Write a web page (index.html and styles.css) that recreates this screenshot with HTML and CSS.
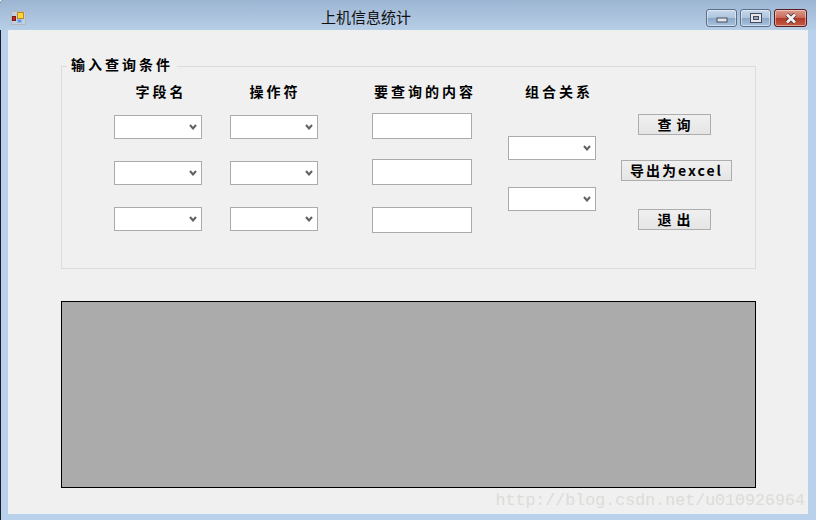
FILE: index.html
```html
<!DOCTYPE html>
<html lang="zh">
<head>
<meta charset="utf-8">
<title>上机信息统计</title>
<link rel="stylesheet" href="styles.css">
</head>
<body>
<div class="window">
  <header class="titlebar">
    <svg class="app-icon" width="15" height="14" viewBox="0 0 15 14">
      <rect x="0" y="0" width="15" height="14" fill="#b4b8bc"/>
      <rect x="1" y="1" width="13" height="12" fill="#c0d0e2"/>
      <rect x="1.5" y="5.5" width="3" height="4" fill="#c82a1c" stroke="#7a1a12"/>
      <rect x="6.5" y="1.5" width="6" height="6" fill="#fdd23c" stroke="#b98c1e"/>
      <rect x="6.5" y="8.5" width="4" height="3" fill="#5d96e8" stroke="#9db8e0"/>
    </svg>
    <h1 class="title">上机信息统计</h1>
    <div class="caption-buttons">
      <button class="cap cap-blue cap-min" type="button" aria-label="最小化">
        <svg width="12" height="6" viewBox="0 0 12 6"><rect x="1" y="1" width="10" height="4" fill="#e6e6ea" stroke="#444c60"/></svg>
      </button>
      <button class="cap cap-blue" type="button" aria-label="最大化">
        <svg width="12" height="10" viewBox="0 0 12 10"><rect x="1.5" y="1.5" width="9" height="7" fill="none" stroke="#e6e6ea" stroke-width="3"/><rect x="0.5" y="0.5" width="11" height="9" fill="none" stroke="#444c60"/><rect x="3.5" y="3.5" width="5" height="3" fill="#8fa6c4" stroke="#444c60"/></svg>
      </button>
      <button class="cap cap-red" type="button" aria-label="关闭">
        <svg width="14" height="11" viewBox="0 0 14 11"><path d="M3 1.5 L11 9.5 M11 1.5 L3 9.5" stroke="#4a3036" stroke-width="4.4"/><path d="M3 1.5 L11 9.5 M11 1.5 L3 9.5" stroke="#f2f0f0" stroke-width="2.8"/></svg>
      </button>
    </div>
  </header>
  <main class="client">
    <fieldset class="group">
      <legend class="legend">输入查询条件</legend>
      <div class="columns">
        <div class="col col-field">
          <div class="head">字段名</div>
          <select class="combo first-combo"></select>
          <select class="combo gap-22"></select>
          <select class="combo gap-22"></select>
        </div>
        <div class="col col-op">
          <div class="head">操作符</div>
          <select class="combo first-combo"></select>
          <select class="combo gap-22"></select>
          <select class="combo gap-22"></select>
        </div>
        <div class="col col-value">
          <div class="head">要查询的内容</div>
          <input class="text first-text" type="text">
          <input class="text gap-20" type="text">
          <input class="text gap-22" type="text">
        </div>
        <div class="col col-rel">
          <div class="head">组合关系</div>
          <select class="combo first-rel"></select>
          <select class="combo gap-27"></select>
        </div>
        <div class="col col-actions">
          <button class="btn btn-narrow first-btn" type="button">查 询</button>
          <button class="btn btn-wide gap-25" type="button">导出为excel</button>
          <button class="btn btn-narrow gap-28" type="button">退 出</button>
        </div>
      </div>
    </fieldset>
    <div class="grid-panel"></div>
  </main>
  <div class="watermark">http://blog.csdn.net/u010926964</div>
</div>
</body>
</html>
```

FILE: styles.css
```css
* { box-sizing: border-box; }
html, body { margin: 0; padding: 0; }
body { width: 816px; height: 520px; overflow: hidden; background: #fff; }

.window {
  position: relative;
  width: 816px;
  height: 520px;
  display: flex;
  flex-direction: column;
  padding: 0 8px 6px 8px;
  background: #b9d1ea;
  box-shadow: inset 1px 0 0 #1a1f26;
  border-top-left-radius: 4px;
}

.titlebar {
  position: relative;
  height: 30px;
  margin: 0 -8px;
  padding: 0 9px 0 11px;
  display: flex;
  align-items: center;
  border-top-left-radius: 4px;
  background: linear-gradient(#9cb5d2, #b7cee7);
}
.app-icon { flex: none; margin-top: 6px; }
.title {
  margin: 3px 0 0 295px;
  font: 400 15px/1 "Noto Sans CJK SC", sans-serif;
  color: #111;
}
.caption-buttons {
  margin-left: auto;
  margin-top: 6px;
  display: flex;
  gap: 3px;
}
.cap {
  width: 31px;
  height: 18px;
  padding: 0;
  display: flex;
  align-items: center;
  justify-content: center;
  border-radius: 3px;
  border: 1px solid #5c6f88;
  box-shadow: inset 0 0 0 1px rgba(255,255,255,.45);
}
.cap-min { padding-top: 4px; }
.cap-blue { background: linear-gradient(#c6d7ea 0, #aec5de 48%, #8ca8c8 52%, #a9c2dd 100%); }
.cap-red { width: 33px; border-color: #5a1a22; background: linear-gradient(#dc9c8e 0, #c96a58 48%, #b23a28 52%, #c25a44 100%); }

.client {
  flex: 1;
  display: flex;
  flex-direction: column;
  background: #f0f0f0;
  padding: 26px 52px 0 53px;
}

.group {
  margin: 0;
  padding: 0;
  height: 213px;
  border: 1px solid #dcdcdc;
  min-width: 0;
}
.legend {
  margin-left: 5px;
  padding: 0 4px;
  height: 20px;
  font: 700 14px/16px "Noto Sans CJK SC", sans-serif;
  letter-spacing: 3px;
  color: #000;
}
.columns {
  display: flex;
  align-items: flex-start;
  padding-left: 52px;
}
.col { display: flex; flex-direction: column; align-items: center; }
.col-field, .col-op, .col-rel { width: 88px; }
.col-op { margin-left: 28px; }
.col-value { width: 100px; margin-left: 54px; }
.col-rel { margin-left: 36px; }
.col-actions { width: 111px; margin-left: 25px; }

.head {
  height: 20px;
  margin-top: 6px;
  white-space: nowrap;
  font: 700 14px/18px "Noto Sans CJK SC", sans-serif;
  letter-spacing: 3px;
  color: #000;
}
.col-field .head { padding-left: 6px; }
.col-op .head { padding-left: 2px; }
.col-value .head { padding-left: 6px; }
.col-rel .head { padding-left: 14px; }

.combo {
  display: block;
  width: 88px;
  height: 24px;
  margin: 0;
  border: 1px solid #ababab;
  border-radius: 0;
  appearance: none;
  background: #fff url("data:image/svg+xml,%3Csvg xmlns='http://www.w3.org/2000/svg' width='8' height='6' viewBox='0 0 8 6'%3E%3Cpath d='M1 1 L4 4.5 L7 1' fill='none' stroke='%23606060' stroke-width='2'/%3E%3C/svg%3E") no-repeat right 4px center;
}
.text {
  display: block;
  width: 100px;
  height: 26px;
  margin: 0;
  padding: 0;
  border: 1px solid #ababab;
  border-radius: 0;
  background: #fff;
}
.first-combo { margin-top: 13px; }
.first-text { margin-top: 11px; }
.first-rel { margin-top: 34px; }
.gap-20 { margin-top: 20px; }
.gap-22 { margin-top: 22px; }
.gap-25 { margin-top: 25px; }
.gap-27 { margin-top: 27px; }
.gap-28 { margin-top: 28px; }

.btn {
  display: block;
  height: 21px;
  padding: 0;
  border: 1px solid #adadad;
  border-radius: 0;
  background: linear-gradient(#f0f0f0, #e5e5e5);
  font: 700 14px/19px "Noto Sans CJK SC", sans-serif;
  color: #000;
  white-space: nowrap;
}
.btn-narrow { width: 73px; align-self: flex-start; margin-left: 17px; letter-spacing: 1px; }
.btn-wide { width: 111px; letter-spacing: 2px; }
.first-btn { margin-top: 38px; }

.grid-panel {
  margin-top: 32px;
  height: 187px;
  border: 1px solid #000;
  background: #ababab;
}

.watermark {
  position: absolute;
  right: 11px;
  bottom: 9px;
  font: 400 16.65px/20px "Liberation Mono", monospace;
  color: #dcdcd8;
  white-space: nowrap;
}
```
